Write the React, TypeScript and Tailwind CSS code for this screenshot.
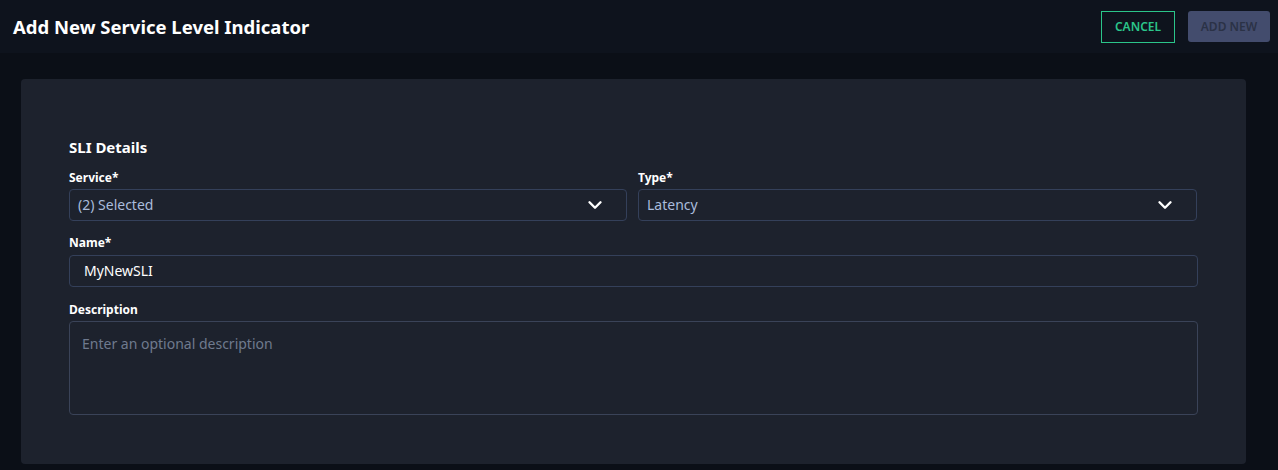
import { ChevronDown } from "lucide-react";

const font = { fontFamily: '"Noto Sans", "Open Sans", sans-serif' };

const Select = ({ value }: { value: string }) => (
  <div className="flex h-[32px] items-center justify-between rounded-[4px] border border-[#34405a] bg-[#1d222d] pl-[8px] pr-[20px]">
    <span className="text-[14px] text-[#a9bcdc]">{value}</span>
    <ChevronDown className="h-[22px] w-[22px] text-white" strokeWidth={2.6} />
  </div>
);

export default function App() {
  return (
    <div className="h-[470px] w-[1278px] overflow-hidden bg-[#0b0f17]" style={font}>
      <header className="flex h-[53px] items-center justify-between bg-[#0e131d] pl-[13px] pr-[8px]">
        <h1 className="text-[18.5px] font-bold text-white">Add New Service Level Indicator</h1>
        <div className="flex items-center gap-[13px]">
          <button className="h-[32px] w-[74px] border border-[#2bc58a] text-[12px] font-semibold text-[#2bc58a]">
            CANCEL
          </button>
          <button className="h-[31px] w-[82px] rounded-[3px] bg-[#434c6d] text-[12px] font-semibold text-[#2b3246]">
            ADD NEW
          </button>
        </div>
      </header>

      <main className="px-[21px] pt-[26px]">
        <section className="h-[385px] w-[1225px] rounded-[4px] bg-[#1d222d] px-[48px] pt-[57px]">
          <h2 className="text-[15px] font-bold text-white">SLI Details</h2>

          <div className="mt-[10px] flex gap-[11px]">
            <div className="w-[558px]">
              <label className="block text-[12px] font-bold text-white">Service*</label>
              <div className="mt-[2px]">
                <Select value="(2) Selected" />
              </div>
            </div>
            <div className="w-[559px]">
              <label className="block text-[12px] font-bold text-white">Type*</label>
              <div className="mt-[2px]">
                <Select value="Latency" />
              </div>
            </div>
          </div>

          <label className="mt-[13px] block text-[12px] font-bold text-white">Name*</label>
          <div className="mt-[3px] flex h-[32px] w-[1129px] items-center rounded-[4px] border border-[#34405a] pl-[14px]">
            <span className="text-[14px] text-white">MyNewSLI</span>
          </div>

          <label className="mt-[14px] block text-[12px] font-bold text-white">Description</label>
          <div className="mt-[2px] h-[94px] w-[1129px] rounded-[4px] border border-[#3a4358] px-[12px] pt-[9px]">
            <span className="text-[14px] text-[#6f7a8e]">Enter an optional description</span>
          </div>
        </section>
      </main>
    </div>
  );
}
